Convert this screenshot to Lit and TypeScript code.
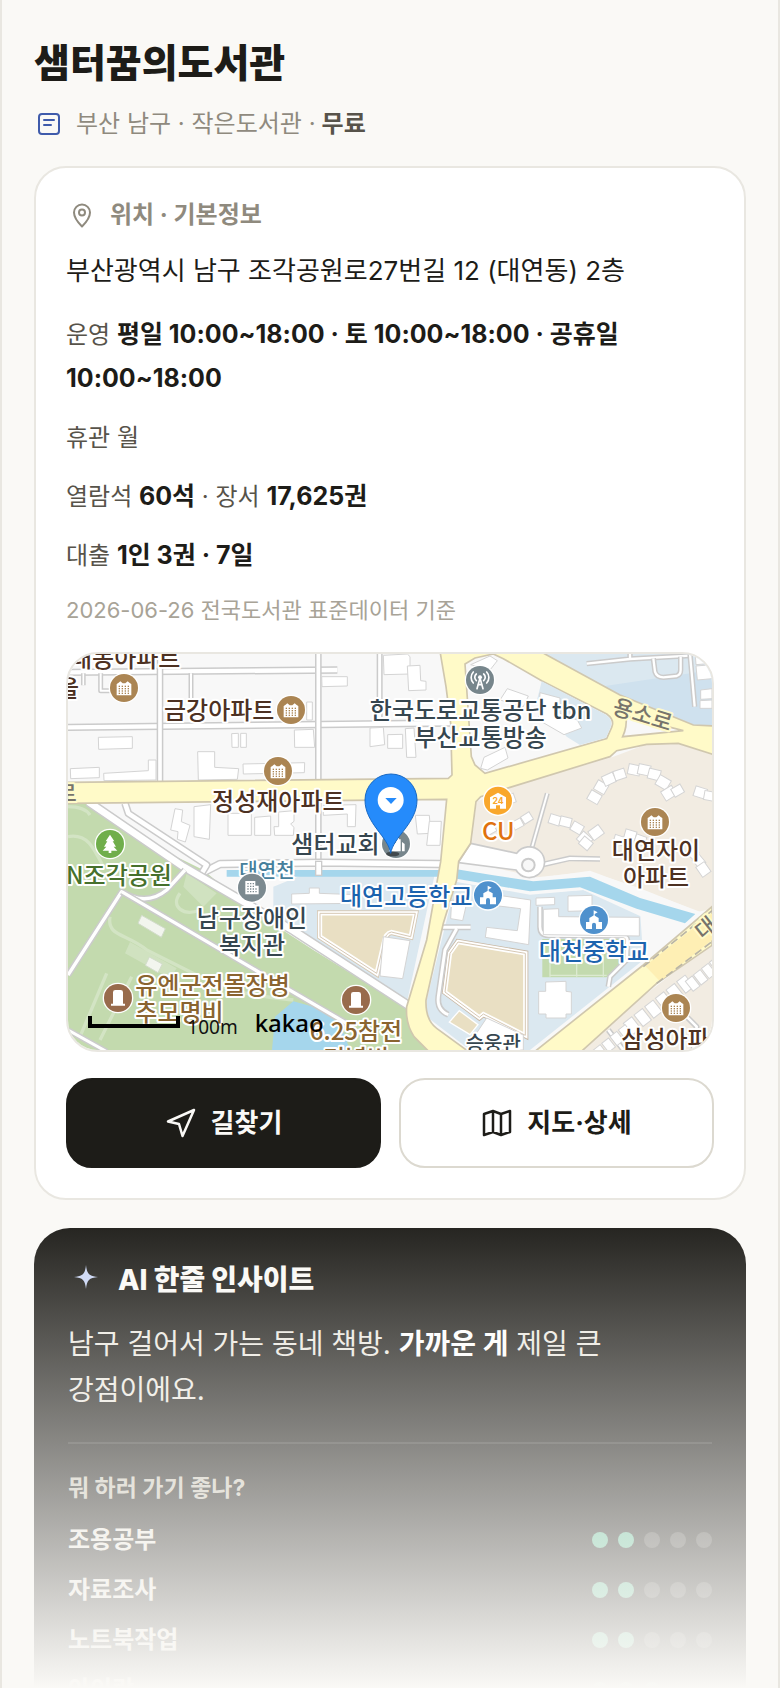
import { LitElement, html, svg, css } from "lit";
import { customElement, property } from "lit/decorators.js";

type Pt = [number, number];

interface Activity {
  name: string;
  score: number;
}

const ACTIVITIES: Activity[] = [
  { name: "조용공부", score: 2 },
  { name: "자료조사", score: 2 },
  { name: "노트북작업", score: 2 },
  { name: "아이랑", score: 3 },
];

/* Buildings of the plain blocks, the school grounds and the estates. */
const BUILDINGS: string[] = [
  "115,292 217,290 217,325 116,328",
  "31,386 118,382 118,413 32,416",
  "131,400 265,392 265,360 288,360 288,420 132,422",
  "413,335 464,335 464,382 536,386 532,418 415,420",
  "515,281 535,280 535,322 516,322",
  "542,280 559,280 559,322 542,322",
  "703,270 760,268 764,322 704,322",
  "549,372 734,368 733,398 550,402",
  "785,110 862,110 862,138 786,140",
  "740,186 757,186 757,240 740,240",
  "930,264 970,262 974,314 930,320",
  "983,284 1028,283 1028,325 983,325",
  "1036,266 1062,264 1068,352 1040,352",
  "970,46 1042,42 1050,50 1050,102 972,104",
  "1042,78 1080,76 1082,122 1098,124 1098,150 1046,152",
  "345,506 368,510 364,545 390,556 376,606 352,598 354,575 332,570",
  "402,500 452,494 448,598 402,590",
  "504,520 574,520 574,586 504,586",
  "584,532 632,528 632,586 584,586",
  "656,516 702,512 702,544 692,552 702,562 700,586 644,586 642,560 656,560",
  "790,496 888,494 886,560 862,560 862,522 790,526",
  "1066,526 1108,526 1112,580 1072,582",
  "1108,544 1144,544 1140,616 1100,616",
  "695,762 748,760 748,744 778,744 778,760 888,764 888,790 695,792",
  "1175,780 1220,790 1208,842 1172,836",
  "1250,756 1412,780 1406,914 1276,892 1280,862 1372,872 1382,806 1250,790",
  "1428,774 1484,772 1484,794 1428,796",
  "1524,768 1596,766 1596,812 1524,814",
  "1450,808 1496,806 1496,830 1738,832 1738,888 1450,884",
  "1457,1026 1518,1024 1518,1054 1534,1056 1534,1122 1518,1122 1518,1134 1458,1134 1458,1122 1436,1122 1436,1054 1457,1054",
  "970,890 1050,902 1028,1016 960,1008",
  "1280,1134 1390,1185 1390,1230 1240,1230 1236,1200",
  "1906,46 1956,42 1956,70 1908,74",
  "1908,78 1956,74 1956,116 1912,120",
  "1922,150 1956,146 1956,176 1922,178",
  "1920,182 1956,180 1956,205 1920,205",
];

/* Estate houses: each is a centre, a half-size and a turn in degrees. */
const HOUSES: [number, number, number, number][] = [
  [1602, 474, 18, 30], [1622, 444, 18, 30], [1648, 420, 18, -25], [1680, 406, 17, -18],
  [1722, 392, 18, 12], [1752, 392, 18, 12], [1782, 406, 18, 14], [1808, 430, 19, 30],
  [1828, 462, 19, -32], [1854, 454, 16, -30], [1920, 460, 18, 18], [1948, 470, 16, 10],
  [1484, 542, 17, 18], [1516, 548, 17, 14], [1550, 566, 17, 30], [1572, 600, 19, 42],
  [1610, 580, 19, -36], [1402, 536, 15, -32], [1374, 554, 15, -28], [1290, 570, 17, -30],
  [1676, 602, 15, 18], [1710, 588, 17, 16], [1740, 602, 16, 20], [1350, 480, 16, -20],
  [1895, 640, 16, 40], [1915, 665, 16, 50], [1928, 690, 18, 55], [1576, 612, 17, 40],
];

@customElement("area-map")
export class AreaMap extends LitElement {
  static styles = css`
    :host {
      display: block;
    }
    svg {
      display: block;
      width: 100%;
      height: auto;
    }
    text {
      font-family: "Noto Sans CJK KR", sans-serif;
      font-size: 72px;
      font-weight: 500;
      paint-order: stroke;
      stroke: #fff;
      stroke-width: 12px;
      stroke-linejoin: round;
    }
    .mid {
      text-anchor: middle;
    }
    .home {
      fill: #4d3122;
    }
    .office {
      fill: #36464f;
    }
    .hall {
      font-size: 60px;
    }
    .school {
      fill: #1c63ae;
    }
    .shop {
      fill: #e0720e;
    }
    .park {
      fill: #46702c;
    }
    .monument {
      fill: #8a6430;
    }
    .stream {
      fill: #46809c;
      font-size: 60px;
    }
    .street {
      fill: #77746c;
      stroke: #fffac8;
      font-size: 66px;
    }
    .scale {
      fill: #111;
      stroke: none;
      font-family: "Noto Sans", sans-serif;
      font-size: 57px;
      font-weight: 400;
    }
    .brand {
      fill: #000;
      stroke: none;
      font-family: "Noto Sans", sans-serif;
      font-size: 72px;
      font-weight: 500;
    }
    .open {
      fill: #f9a72b;
      stroke: none;
      font-family: "Inter", sans-serif;
      font-size: 26px;
      font-weight: 700;
    }
  `;

  private road(d: string, width: number) {
    return svg`<path d=${d} fill="none" stroke="#cbcbcb" stroke-width=${width + 9} stroke-linejoin="round" />
      <path d=${d} fill="none" stroke="#fff" stroke-width=${width} stroke-linejoin="round" />`;
  }

  private disc([x, y]: Pt, color: string, glyph: unknown) {
    return svg`<g transform="translate(${x} ${y})">
      <circle r="46" fill="#fff" />
      <circle r="42" fill=${color} />
      ${glyph}
    </g>`;
  }

  private apartment(at: Pt) {
    const windows: Pt[] = [];
    for (let r = 0; r < 4; r++) for (let c = 0; c < 4; c++) windows.push([-16 + c * 9, -7 + r * 7]);
    return this.disc(at, "#ab8553", svg`
      <path d="M-22 22V-12L-17 -15L-11 -20L-4 -14H4L11 -20L17 -15L22 -12V22Z" fill="#fff" />
      ${windows.map(([x, y]) => svg`<rect x=${x} y=${y} width="4" height="4" fill="#ab8553" />`)}`);
  }

  private schoolPin(at: Pt) {
    return this.disc(at, "#4f91cd", svg`
      <path d="M-24 27V6H-14V-6L0 -14L14 -6V6H24V27H6V14A6 6 0 0 0 -6 14V27Z" fill="#fff" />
      <path d="M-1 -12V-29L11 -23L2 -18V-12Z" fill="#fff" />`);
  }

  private monumentPin(at: Pt) {
    return this.disc(at, "#986b4c", svg`
      <path d="M-15 17V-17Q-15 -24 -8 -24H8Q15 -24 15 -17V17H21V23H-21V17Z" fill="#fff" />`);
  }

  render() {
    return html`<svg viewBox="24 42 1932 1188" role="img" aria-label="샘터꿈의도서관 주변 지도">
      <rect x="24" y="42" width="1932" height="1188" fill="#f8f8f8" />

      <path d="M24 488H84L300 626L430 690L560 800L760 930L1050 1110L1120 1230H24Z" fill="#c3daae" />
      <path d="M24 500C60 500 80 510 90 525M24 590C80 580 100 620 130 680M150 830C140 890 200 880 260 930L420 1010C520 1060 600 1070 700 1080M360 760C330 800 370 830 420 810M140 1000L60 1190M215 1010L120 1200" fill="none" stroke="#d3e4c4" stroke-width="10" />
      <path d="M210 906L350 985L330 1015L195 940ZM380 700L470 760L430 800L370 740Z" fill="#d0e2c0" />
      <path d="M645 1130L700 1084L760 1100L840 1150L870 1230H636Z" fill="#a5d6ec" />
      <g fill="#f2f5ee" stroke="#d2dccb" stroke-width="3">
        <path d="M245 826L316 866L304 892L234 850Z" />
        <path d="M268 951L307 972L294 998L256 976Z" />
      </g>

      <path d="M640 740L740 700H1125L1040 1090L860 970L640 830Z" fill="#dbe8f0" />
      <path d="M1190 720L1420 760L1570 750L1740 810L1750 960L1410 1230H1230L1100 1130V1080Z" fill="#dbe8f0" />
      <path d="M1412 42H1956V260L1900 256L1680 165Z" fill="#dbe8f0" />
      <path d="M1500 110L1610 142L1956 90V258L1900 255L1690 170Z" fill="#cfe1ee" />
      <path d="M1350 442L1660 350L1760 313H1860L1956 345V806L1915 815L1740 745L1590 695L1430 712L1200 660L1235 610L1250 485Z" fill="#f2ece2" />
      <path d="M1956 910L1540 1230H1956Z" fill="#f2ece2" />

      <path d="M780 820H1066L1052 890L994 876Q976 880 972 905L950 1000L780 890Z" fill="#e9dfc3" stroke="#d6c8b4" stroke-width="18" />
      <path d="M780 820H1066L1052 890L994 876Q976 880 972 905L950 1000L780 890Z" fill="#e9dfc3" stroke="#fff" stroke-width="13" />
      <path d="M780 820H1066L1052 890L994 876Q976 880 972 905L950 1000L780 890Z" fill="none" stroke="#d6c8b4" stroke-width="3" />
      <path d="M1194 906L1396 940V1186L1270 1122L1258 1132L1155 1056L1170 940Z" fill="#e9dfc3" stroke="#c9b8a4" stroke-width="18" />
      <path d="M1194 906L1396 940V1186L1270 1122L1258 1132L1155 1056L1170 940Z" fill="#e9dfc3" stroke="#fff" stroke-width="13" />
      <path d="M1194 906L1396 940V1186L1270 1122L1258 1132L1155 1056L1170 940Z" fill="none" stroke="#d6c8b4" stroke-width="3" />
      <path d="M1198 1112L1254 1154L1230 1184L1168 1146Z" fill="#e9dfc3" stroke="#fff" stroke-width="4" />
      <path d="M1447 897H1700L1710 950L1640 1012H1447Z" fill="#c3daae" />
      <path d="M1470 1010V905M1550 910V1010M1630 905V1010M1550 982V940M1470 1006H1640" fill="none" stroke="#dcead0" stroke-width="4" />

      ${this.road("M24 97L832 90", 13)}
      ${this.road("M24 262L1175 249", 13)}
      ${this.road("M300 42V425", 11)}
      ${this.road("M775 42V420", 11)}
      ${this.road("M959 42V240", 9)}
      ${this.road("M393 100V176", 6)}
      ${this.road("M70 100V136", 5)}
      ${this.road("M122 100V152H160", 6)}
      ${this.road("M775 480V700", 11)}
      ${this.road("M425 700L480 672L780 668L1140 672", 16)}
      ${this.road("M195 490L205 520L440 675L425 700", 14)}
      ${this.road("M85 485L370 680L700 872L1045 1096", 20)}
      ${this.road("M24 1005L185 755Q260 800 320 750L375 690", 10)}
      ${this.road("M185 755L620 1010L860 1150", 10)}
      ${this.road("M24 1170L140 1235", 9)}
      ${this.road("M1580 71L1710 57V42M1710 57L1890 47", 7)}
      ${this.road("M1780 55L1785 95Q1790 112 1810 112L1850 108Q1862 104 1862 90V50", 7)}
      ${this.road("M1890 42L1904 200", 7)}
      ${this.road("M1462 460L1408 650", 6)}
      ${this.road("M1420 680L1530 655L1620 657", 8)}
      ${this.road("M1145 862H1232M1190 866L1155 930L1135 1070Q1130 1110 1165 1124", 9)}
      ${this.road("M1440 800V860Q1440 885 1465 886L1690 888Q1705 890 1702 910L1700 960L1650 1010L1645 1040", 8)}
      ${this.road("M1645 1170L1690 1230M1880 1130L1910 1160L1900 1230", 8)}

      <g fill="#fff" stroke="#d4d4d4" stroke-width="3">
        ${BUILDINGS.map((p) => svg`<polygon points=${p} />`)}
        ${HOUSES.map(([x, y, r, a]) => svg`<rect x=${x - r} y=${y - r} width=${r * 2} height=${r * 1.7} transform="rotate(${a} ${x} ${y})" />`)}
        ${[0, 1, 2, 3, 4, 5].map((i) => svg`<rect x=${1690 + i * 32} y=${1150 - i * 25} width="32" height="44" transform="rotate(-38 ${1690 + i * 32} ${1150 - i * 25})" />`)}
        ${[0, 1, 2, 3].map((i) => svg`<rect x=${1876 + i * 24} y=${1024 - i * 19} width="26" height="38" transform="rotate(-38 ${1876 + i * 24} ${1024 - i * 19})" />`)}
        ${[0, 1, 2, 3].map((i) => svg`<rect x=${1600 + i * 25} y=${1230 - i * 20} width="26" height="34" transform="rotate(-38 ${1600 + i * 25} ${1230 - i * 20})" />`)}
      </g>

      <path d="M500 690H1140V710H500Z" fill="#a5d6ec" />
      <path d="M1190 686L1300 700L1420 716L1590 692L1740 748L1920 815L1870 900L1760 960L1745 830L1570 750L1410 764L1190 726Z" fill="#f8f8f8" />
      <path d="M1190 688L1300 706L1420 724L1590 710L1740 774L1906 822L1875 850L1730 806L1560 742L1410 754L1190 716Z" fill="#a5d6ec" />
      <rect x="767" y="664" width="18" height="42" fill="#fff" stroke="#cbcbcb" stroke-width="4" />

      <path d="M1232 610L1370 640A46 46 0 1 1 1368 690L1195 668Z" fill="#fff" stroke="#cbcbcb" stroke-width="5" />
      <circle cx="1405" cy="675" r="19" fill="#f8f8f8" stroke="#cbcbcb" stroke-width="6" />

      <g stroke="#d0c7ae" stroke-width="5" fill="#fffac8">
        <path d="M1956 800L1750 975L1420 1238H1560L1790 1030L1956 916Z" />
        <path d="M16 427L1165 415L1176 405L1172 250L1158 140L1140 34H1440L1680 165L1900 255L1964 258V345L1855 310L1760 313L1670 332L1650 350L1350 442L1262 470L1248 485L1232 610L1196 664L1190 720L1150 850L1098 1080Q1096 1140 1130 1165L1230 1238H1110L1062 1190Q1036 1150 1040 1100L1100 900L1142 665L1160 478L16 490Z" />
      </g>
      <g stroke="#d0c7ae" stroke-width="5" fill="#f8f8f8">
        <path d="M1215 72L1245 54L1300 42L1330 56L1445 122L1640 222Q1665 240 1655 262L1640 296L1275 400L1245 375L1234 350Z" />
        <path d="M1698 228L1870 272L1688 290Q1702 260 1698 228Z" />
      </g>
      <path d="M1445 124L1638 224Q1660 240 1652 262L1638 293L1560 315L1520 290L1430 184Z" fill="#dbe8f0" />
      <g fill="#fff" stroke="#d4d4d4" stroke-width="3">
        <path d="M1262 385L1272 352L1335 322L1344 354L1282 390ZM1320 180L1342 146L1405 168L1390 200ZM1440 158L1500 174V220L1552 240L1565 264L1512 284L1436 240ZM1232 74L1290 48L1312 62L1290 90Z" />
      </g>
      <path d="M1956 820L1756 978L1800 1024L1956 900Z" fill="#feefb4" />
      <path d="M1750 980L1956 812M1790 1030L1956 905" stroke="#b9b4a6" stroke-width="5" stroke-dasharray="24 12" fill="none" />

      ${this.apartment([192, 144])}
      ${this.apartment([693, 210])}
      ${this.apartment([654, 393])}
      ${this.apartment([1785, 546])}
      ${this.apartment([1848, 1104])}
      ${this.schoolPin([1284, 766])}
      ${this.schoolPin([1602, 840])}
      ${this.monumentPin([174, 1074])}
      ${this.monumentPin([888, 1080])}
      ${this.disc([150, 612], "#70ae4b", svg`
        <path d="M0 -28L13 -8H8L18 8H11L22 20H4V27H-4V20H-22L-11 8H-18L-8 -8H-13Z" fill="#fff" />`)}
      ${this.disc([1260, 120], "#77868c", svg`
        <g fill="none" stroke="#fff" stroke-width="5" stroke-linecap="round">
          <path d="M-9 26L0 -6L9 26M-6 14H6" />
          <path d="M-11 2A13 13 0 0 1 -11 -18M-20 9A24 24 0 0 1 -20 -24M11 2A13 13 0 0 0 11 -18M20 9A24 24 0 0 0 20 -24" />
        </g>
        <circle cy="-8" r="6" fill="#fff" />`)}
      ${this.disc([1008, 612], "#77868c", svg`
        <path d="M-20 22V-2L-10 -12L0 -2V-14H4V-22H9V-14H14V22ZM18 22V-6L26 0V22Z" fill="#fff" />`)}
      ${this.disc([1314, 482], "#f9a72b", svg`
        <path d="M-24 24V-10L0 -24L24 -10V24H6V14H-6V24Z" fill="#fff" />
        <text class="open mid" x="0" y="10">24</text>`)}

      <text class="home" x="30" y="80">대동아파트</text>
      <text class="home mid" x="24" y="170">을</text>
      <text class="home" x="312" y="236">금강아파트</text>
      <text class="home mid" x="655" y="511">정성재아파트</text>
      <text class="office" x="694" y="638">샘터교회</text>
      <text class="office mid" x="1262" y="237">한국도로교통공단 tbn</text>
      <text class="office mid" x="1262" y="317">부산교통방송</text>
      <text class="street mid" x="1748" y="248" transform="rotate(17 1748 224)">용소로</text>
      <text class="shop mid" x="1315" y="601">CU</text>
      <text class="home mid" x="1788" y="658">대연자이</text>
      <text class="home mid" x="1788" y="738">아파트</text>
      <text class="park" x="18" y="731">N조각공원</text>
      <text class="stream" x="538" y="714">대연천</text>
      ${this.disc([576, 743], "#7c8a90", svg`
        <path d="M-20 -20H10V-6H20V20H-20Z" fill="#fff" />
        <path d="M-14 -12H6M-14 -4H6M-14 4H14M-14 12H14" stroke="#7c8a90" stroke-width="4" stroke-dasharray="4 4" />`)}
      <text class="office mid" x="576" y="861">남구장애인</text>
      <text class="office mid" x="576" y="942">복지관</text>
      <text class="school" x="840" y="796">대연고등학교</text>
      <text class="school mid" x="1602" y="959">대천중학교</text>
      <text class="street mid" x="1942" y="886" transform="rotate(-38 1942 870)">대</text>
      <text class="monument" x="226" y="1062">유엔군전몰장병</text>
      <text class="monument" x="226" y="1142">추모명비</text>
      <text class="monument mid" x="888" y="1200">6.25참전</text>
      <text class="monument mid" x="888" y="1280">기념비</text>
      <text class="office hall mid" x="1300" y="1234">승웅관</text>
      <text class="home" x="1684" y="1225">삼성아파트</text>
      <text class="street mid" x="20" y="482">로</text>

      <path d="M90 1128V1158H354V1128" fill="none" stroke="#000" stroke-width="12" />
      <text class="scale" x="382" y="1181">100m</text>
      <text class="brand" x="584" y="1175">kakao</text>

      <ellipse cx="998" cy="642" rx="20" ry="7" fill="#000" opacity=".45" />
      <path d="M992 640C985 590 915 550 915 480A78 78 0 0 1 1071 480C1071 550 1000 590 992 640Z" fill="#258bfb" stroke="#1768c4" stroke-width="3" />
      <circle cx="992" cy="480" r="39" fill="#fff" />
      <path d="M976 474H1010L993 492Z" fill="#258bfb" />
    </svg>`;
  }
}

@customElement("score-dots")
export class ScoreDots extends LitElement {
  @property({ type: Number }) score = 0;

  static styles = css`
    :host {
      display: flex;
      gap: 10px;
    }
    .dot {
      width: 16px;
      height: 16px;
      border-radius: 50%;
      background: #494844;
    }
    .on {
      background: #5fbd96;
    }
  `;

  render() {
    return [1, 2, 3, 4, 5].map((n) => html`<span class="dot ${n <= this.score ? "on" : ""}"></span>`);
  }
}

@customElement("app-root")
export class AppRoot extends LitElement {
  static styles = css`
    :host {
      display: block;
      position: relative;
      box-sizing: border-box;
      height: 100vh;
      overflow: hidden;
      padding: 36px 32px 0;
      border: 0 solid #e9e7e1;
      border-width: 0 2px;
      background: #faf9f6;
      color: #1d1c18;
      font-family: "Inter", "Noto Sans CJK KR", sans-serif;
      font-size: 24px;
      line-height: 44px;
      word-break: keep-all;
    }
    h1,
    h2,
    h3,
    p,
    ul {
      margin: 0;
      padding: 0;
      font-size: 24px;
    }
    svg {
      fill: none;
      stroke: currentColor;
      stroke-width: 2;
      stroke-linecap: round;
      stroke-linejoin: round;
      flex: none;
    }
    .title {
      font-size: 39px;
      line-height: 54px;
      font-weight: 800;
    }
    .meta {
      display: flex;
      align-items: center;
      gap: 12px;
      margin: 16px 0 24px;
      color: #8f8a7e;
      line-height: 36px;
    }
    .meta-text {
      display: flex;
      gap: 6px;
    }
    .meta svg {
      color: #3f5bab;
    }
    .meta b {
      color: #57534a;
      font-weight: 600;
    }
    .card {
      padding: 30px;
      border: 2px solid #e9e7e1;
      border-radius: 32px;
      background: #fff;
    }
    .label {
      display: flex;
      align-items: center;
      gap: 12px;
      color: #8f8a7e;
      font-weight: 700;
      line-height: 34px;
    }
    .address {
      margin: 19px 0 22px;
      font-size: 26px;
      line-height: 40px;
    }
    .facts {
      display: grid;
      gap: 15px;
      color: #57534a;
    }
    .facts b {
      color: #1d1c18;
      font-size: 25px;
      line-height: 32px;
      font-weight: 700;
    }
    .source {
      margin: 16px 0 26px;
      color: #a8a397;
      font-size: 22px;
      line-height: 32px;
    }
    .map {
      border: 2px solid #e9e7e1;
      border-radius: 32px;
      overflow: hidden;
    }
    .actions {
      display: grid;
      grid-template-columns: 1fr 1fr;
      gap: 18px;
      margin-top: 26px;
    }
    .action {
      display: flex;
      align-items: center;
      justify-content: center;
      gap: 14px;
      height: 90px;
      padding: 0;
      border: 2px solid #dcd9d0;
      border-radius: 26px;
      background: #fff;
      color: #1d1c18;
      font: 700 26px/40px "Inter", "Noto Sans CJK KR", sans-serif;
    }
    .action svg {
      stroke-width: 2.5;
    }
    .primary {
      border-color: #1d1c18;
      background: #1d1c18;
      color: #faf9f6;
    }
    .insight {
      margin-top: 28px;
      padding: 34px;
      border-radius: 36px;
      background: #1d1c18;
      color: #ece9e1;
    }
    .insight-title {
      display: flex;
      align-items: center;
      gap: 14px;
      color: #faf9f6;
      font-size: 28px;
      line-height: 34px;
      font-weight: 800;
    }
    .spark {
      fill: #c9d5f5;
      stroke: none;
    }
    .summary {
      margin: 23px 0 29px;
      font-size: 28px;
      line-height: 46px;
    }
    .summary b {
      color: #fff;
      font-weight: 700;
    }
    .uses {
      padding-top: 28px;
      border-top: 2px solid #363531;
    }
    .question {
      margin-bottom: 18px;
      color: #c9c5b8;
      font-size: 23px;
      line-height: 32px;
      font-weight: 700;
    }
    .list {
      display: grid;
      gap: 14px;
      list-style: none;
    }
    .row {
      display: flex;
      align-items: center;
      justify-content: space-between;
      line-height: 36px;
      font-weight: 600;
    }
    .fade {
      position: absolute;
      inset: auto 0 0;
      height: 480px;
      background: linear-gradient(#faf9f600, #faf9f6);
      pointer-events: none;
    }
  `;

  render() {
    return html`
      <h1 class="title">샘터꿈의도서관</h1>
      <p class="meta">
        <svg width="30" height="30" viewBox="0 0 30 30" aria-hidden="true">
          <rect x="5" y="5" width="20" height="20" rx="3" />
          <path d="M10 11H20M10 16H17" />
        </svg>
        <span class="meta-text"><span>부산 남구 · 작은도서관 ·</span><b>무료</b></span>
      </p>

      <section class="card">
        <h2 class="label">
          <svg width="32" height="32" viewBox="0 0 32 32" aria-hidden="true">
            <path d="M16 27.500C12 23.500 8 19 8 13.500A8 8 0 0 1 24 13.500C24 19 20 23.500 16 27.500Z" />
            <circle cx="16" cy="13.500" r="3" />
          </svg>
          위치 · 기본정보
        </h2>
        <p class="address">부산광역시 남구 조각공원로27번길 12 (대연동) 2층</p>
        <div class="facts">
          <p>운영 <b>평일 10:00~18:00 · 토 10:00~18:00 · 공휴일 10:00~18:00</b></p>
          <p>휴관 월</p>
          <p>열람석 <b>60석</b> · 장서 <b>17,625권</b></p>
          <p>대출 <b>1인 3권 · 7일</b></p>
        </div>
        <p class="source">2026-06-26 전국도서관 표준데이터 기준</p>
        <div class="map"><area-map></area-map></div>
        <div class="actions">
          <button class="action primary" type="button">
            <svg width="32" height="32" viewBox="0 0 32 32" aria-hidden="true">
              <path d="M29 3L3 14.500L14 17L17.500 29Z" />
            </svg>
            길찾기
          </button>
          <button class="action" type="button">
            <svg width="32" height="32" viewBox="0 0 32 32" aria-hidden="true">
              <path d="M3 7L12 4L20 7L29 4V25L20 28L12 25L3 28ZM12 4V25M20 7V28" />
            </svg>
            지도·상세
          </button>
        </div>
      </section>

      <section class="insight">
        <h2 class="insight-title">
          <svg class="spark" width="36" height="36" viewBox="0 0 36 36" aria-hidden="true">
            <path d="M18 3C19 12 21 14 30 15C21 16 19 18 18 27C17 18 15 16 6 15C15 14 17 12 18 3Z" />
          </svg>
          AI 한줄 인사이트
        </h2>
        <p class="summary">남구 걸어서 가는 동네 책방. <b>가까운 게</b> 제일 큰 강점이에요.</p>
        <div class="uses">
          <h3 class="question">뭐 하러 가기 좋나?</h3>
          <ul class="list">
            ${ACTIVITIES.map(
              (a) => html`<li class="row"><span>${a.name}</span><score-dots .score=${a.score}></score-dots></li>`,
            )}
          </ul>
        </div>
      </section>
      <div class="fade"></div>
    `;
  }
}
